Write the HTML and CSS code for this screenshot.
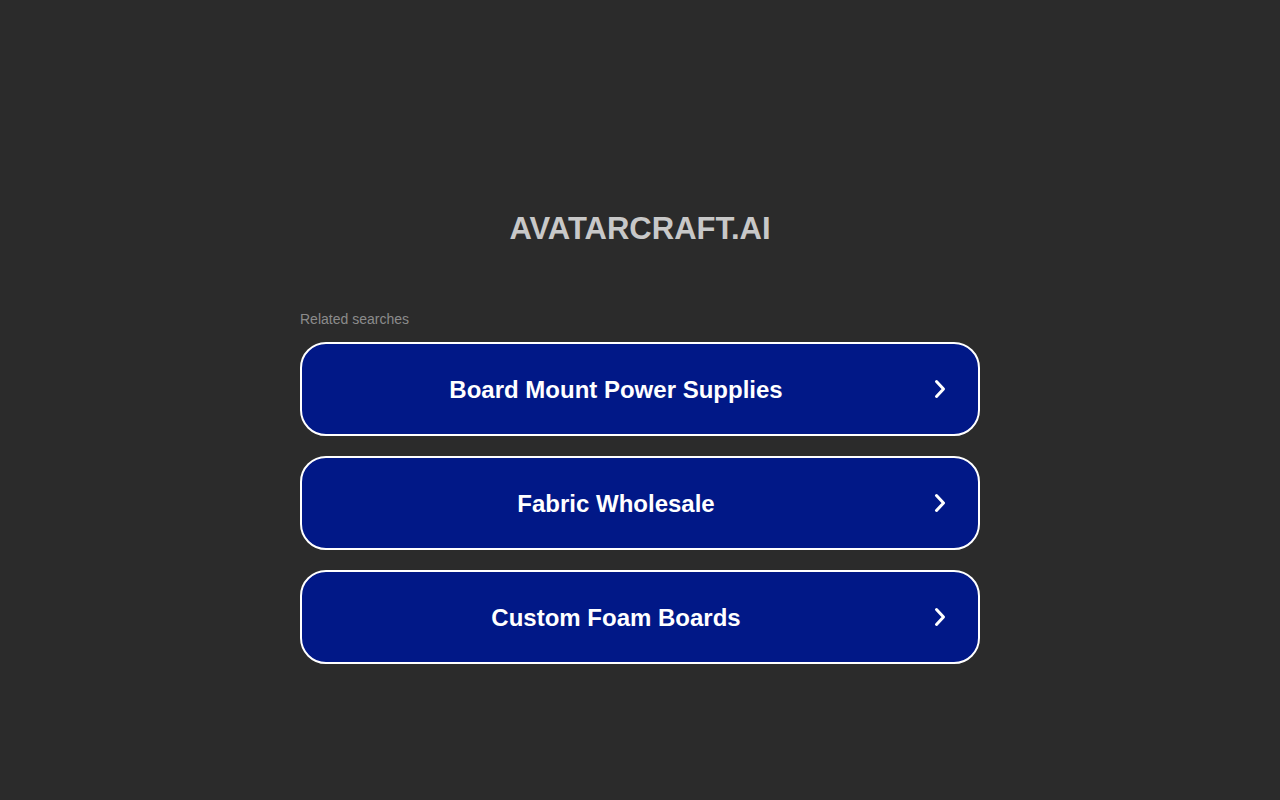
FILE: index.html
```html
<!DOCTYPE html>
<html>
<head>
<meta charset="utf-8">
<link rel="stylesheet" href="styles.css">
</head>
<body>
<div class="page">
  <h1 class="title">AVATARCRAFT.AI</h1>
  <div class="related">
    <div class="label">Related searches</div>
    <a class="item" href="#"><span class="text">Board Mount Power Supplies</span><svg class="chev" viewBox="0 0 16 24" width="16" height="24"><path d="M4.5 4.5 L11.5 12 L4.5 19.5" fill="none" stroke="#fff" stroke-width="3" stroke-linecap="round" stroke-linejoin="round"/></svg></a>
    <a class="item" href="#"><span class="text">Fabric Wholesale</span><svg class="chev" viewBox="0 0 16 24" width="16" height="24"><path d="M4.5 4.5 L11.5 12 L4.5 19.5" fill="none" stroke="#fff" stroke-width="3" stroke-linecap="round" stroke-linejoin="round"/></svg></a>
    <a class="item" href="#"><span class="text">Custom Foam Boards</span><svg class="chev" viewBox="0 0 16 24" width="16" height="24"><path d="M4.5 4.5 L11.5 12 L4.5 19.5" fill="none" stroke="#fff" stroke-width="3" stroke-linecap="round" stroke-linejoin="round"/></svg></a>
  </div>
</div>
</body>
</html>
```
FILE: styles.css
```css
html, body {
  margin: 0;
  padding: 0;
  background: #2b2b2b;
  font-family: Arial, "Liberation Sans", sans-serif;
}
.page {
  display: flex;
  flex-direction: column;
  align-items: center;
  padding-top: 210px;
}
.title {
  margin: 0;
  font-size: 31px;
  line-height: 38px;
  font-weight: bold;
  color: #c8c8c8;
}
.related {
  width: 680px;
  margin-top: 62px;
  display: flex;
  flex-direction: column;
}
.label {
  font-size: 14px;
  line-height: 18px;
  color: #8b8b8b;
  margin-bottom: 14px;
}
.item {
  box-sizing: border-box;
  height: 94px;
  border: 2px solid #ffffff;
  border-radius: 26px;
  background: #011887;
  display: flex;
  align-items: center;
  padding: 0 30px;
  margin-bottom: 20px;
  text-decoration: none;
}
.text {
  flex: 1;
  text-align: center;
  color: #ffffff;
  font-size: 24px;
  font-weight: bold;
  padding-right: 32px;
  padding-top: 2px;
}
.chev {
  display: block;
}
```
